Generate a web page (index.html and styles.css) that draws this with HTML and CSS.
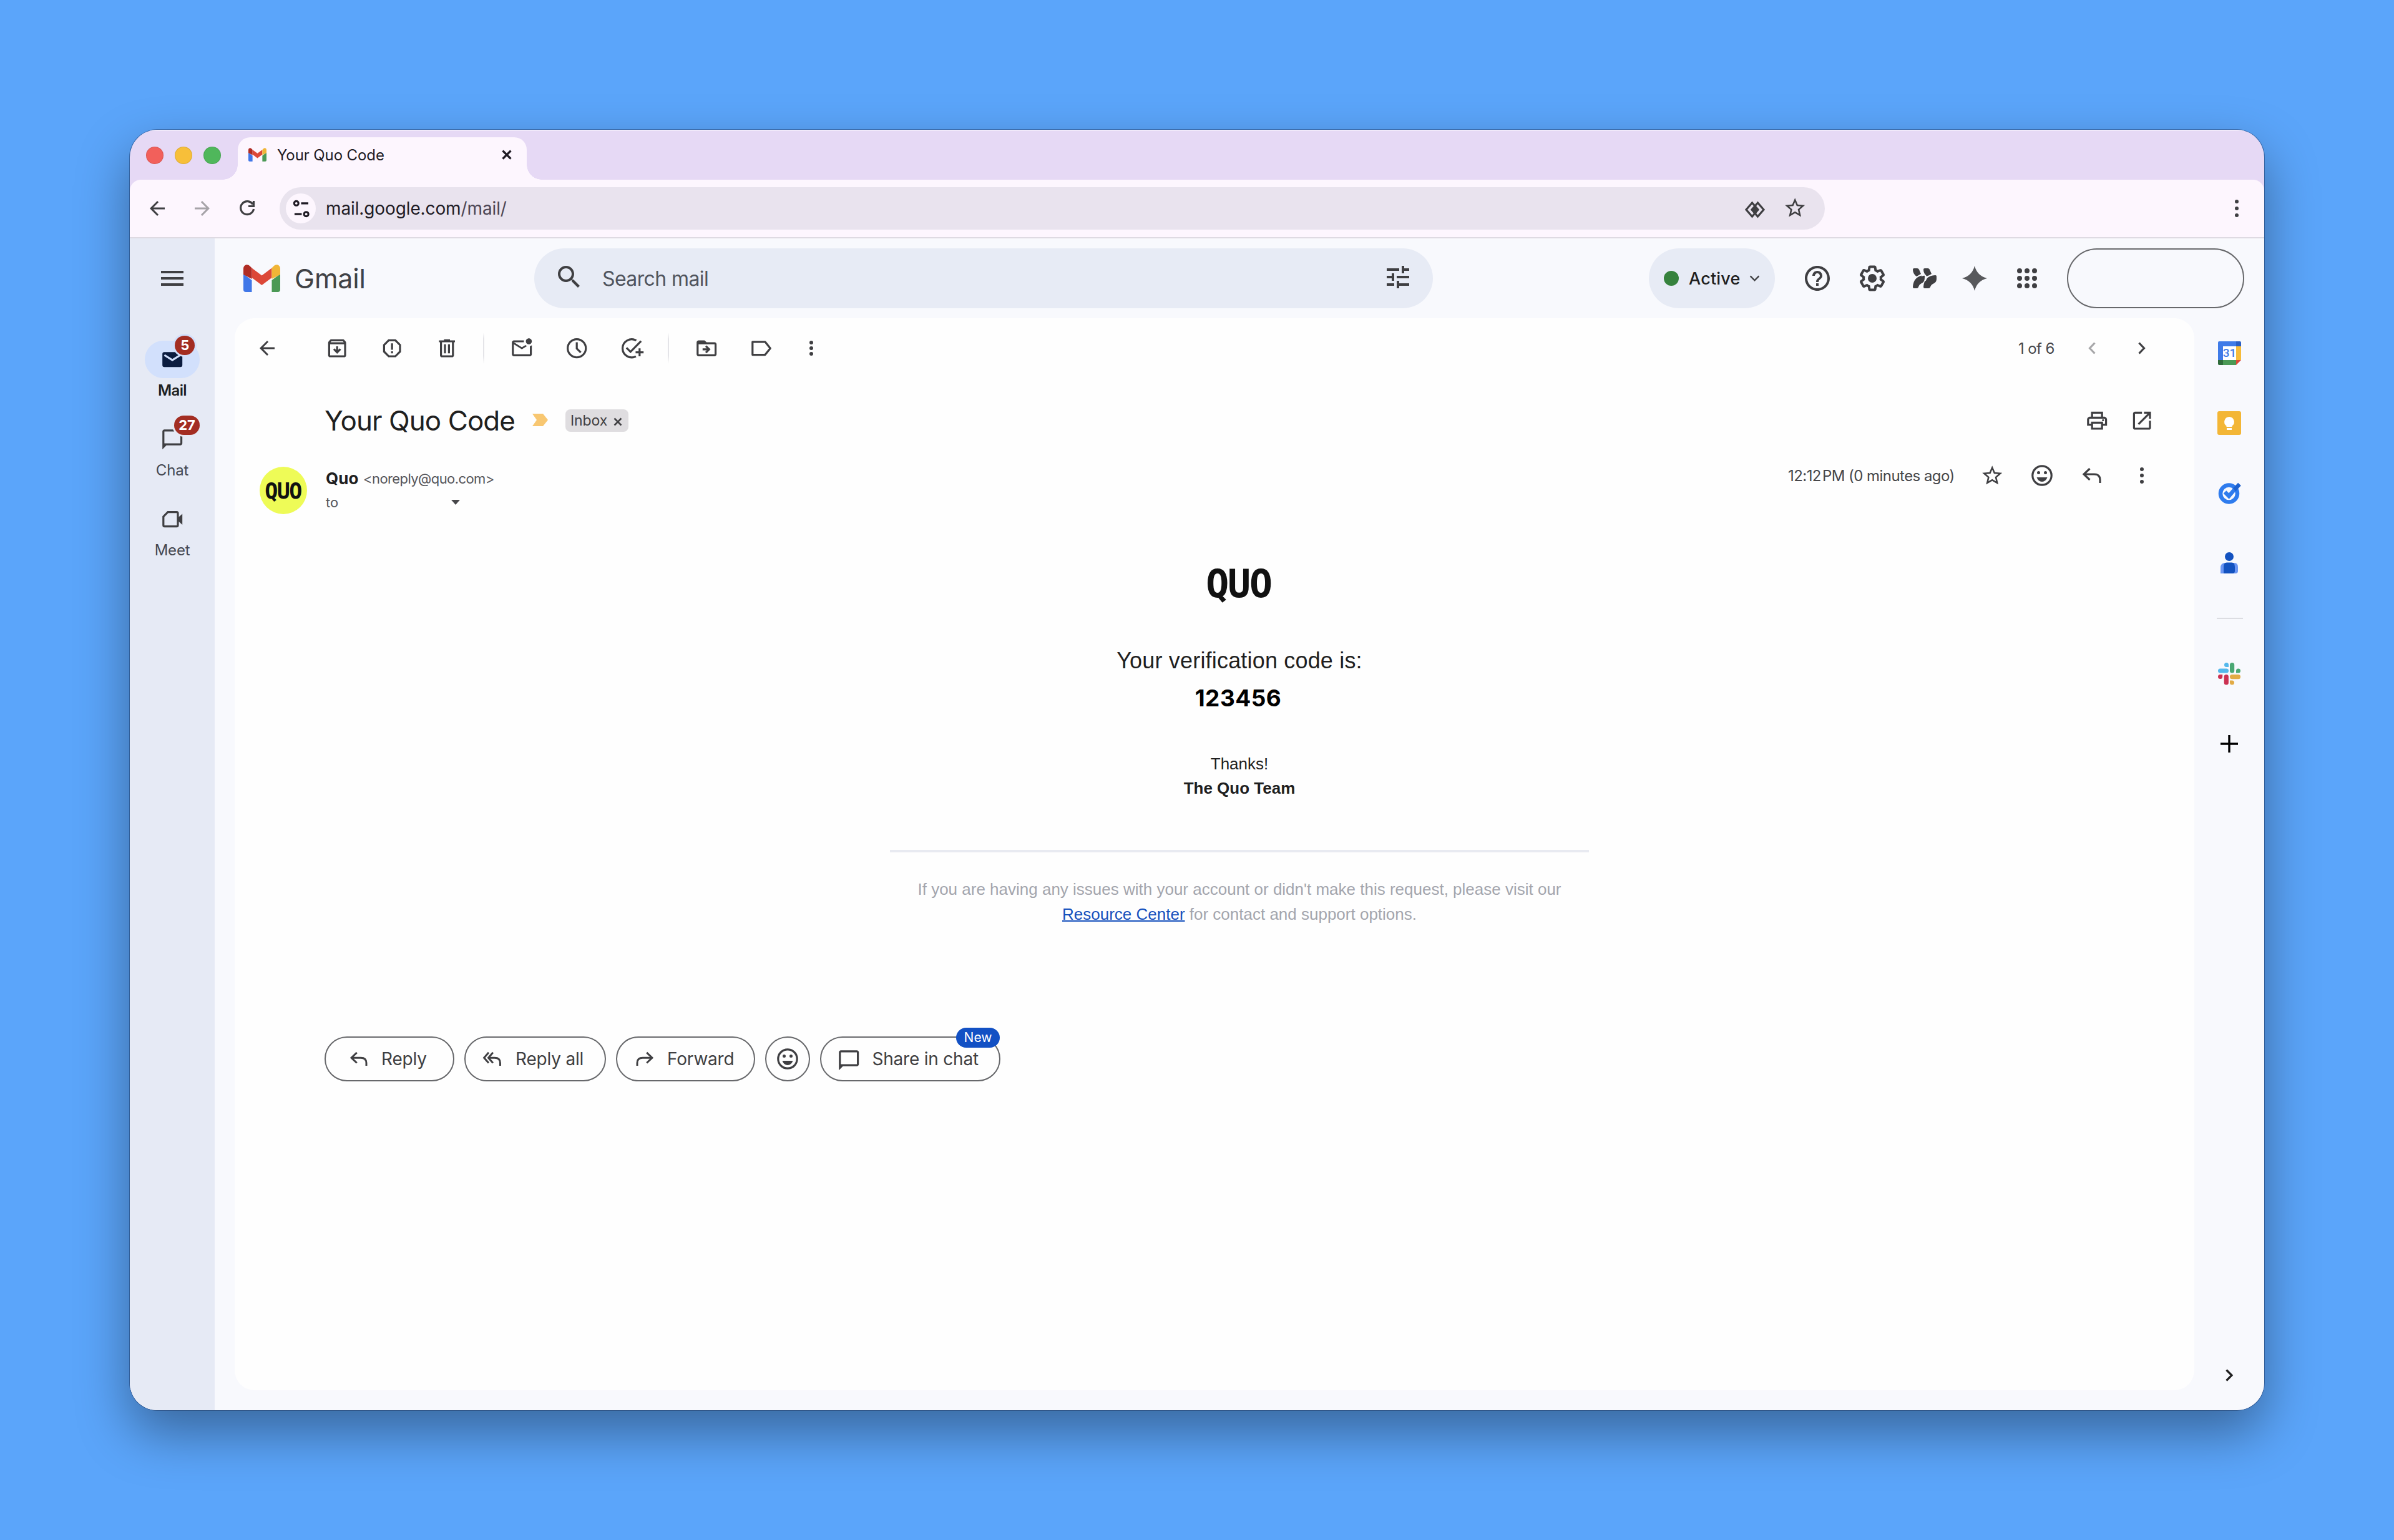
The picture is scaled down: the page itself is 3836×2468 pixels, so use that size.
FILE: index.html
```html
<!DOCTYPE html>
<html lang="en">
<head>
<meta charset="utf-8">
<title>Your Quo Code</title>
<link rel="stylesheet" href="styles.css">
</head>
<body>
<div class="window">
  <div class="tabstrip">
    <span class="light red"></span><span class="light yellow"></span><span class="light green"></span>
    <div class="tab">
      <svg class="fav" viewBox="0 0 59 44"><use href="#gmail"/></svg>
      <span class="t tab-title">Your Quo Code</span>
      <svg class="tab-x" viewBox="0 0 16 16"><path class="s3" d="M1.5 1.5l13 13M14.5 1.5l-13 13"/></svg>
    </div>
  </div>
  <div class="toolbar">
    <svg class="nav" viewBox="0 0 24 24"><path d="M20 11H7.83l5.59-5.59L12 4l-8 8 8 8 1.41-1.41L7.83 13H20v-2z"/></svg>
    <svg class="nav dim" viewBox="0 0 24 24"><path d="M4 11h12.17l-5.59-5.59L12 4l8 8-8 8-1.41-1.41L16.17 13H4v-2z"/></svg>
    <svg class="nav" viewBox="0 0 36 36"><path class="s3" d="M27 11.5A10.5 10.5 0 1 0 28.5 19M28.5 6v8.5H20"/></svg>
    <div class="omnibox">
      <span class="site"><svg viewBox="0 0 26 30"><path class="s3" d="M13 6h12M2 24h12"/><circle class="s3" cx="5" cy="6" r="3.6"/><circle class="s3" cx="21.5" cy="24" r="3.6"/></svg></span>
      <span class="t url">mail.google.com<span class="path">/mail/</span></span>
      <svg class="lens" viewBox="0 0 32 26"><path class="s3" d="M11.5 2L2 13l9.5 11L21 13zM20.5 2L11 13l9.5 11L30 13z"/><path d="M16 6.5l5.5 6.5-5.5 6.5-5.5-6.5z"/></svg>
      <svg class="ic obstar" viewBox="0 0 24 24"><use href="#star"/></svg>
    </div>
    <svg class="menu" viewBox="0 0 8 28"><circle cx="4" cy="3" r="3"/><circle cx="4" cy="14" r="3"/><circle cx="4" cy="25" r="3"/></svg>
  </div>
  <div class="app">
    <nav class="rail">
      <div class="burger"><i></i><i></i><i></i></div>
      <div class="rail-item on">
        <span class="pill"><svg class="ic" viewBox="0 0 24 24"><path d="M4 4.5h16a2 2 0 0 1 2 2v11a2 2 0 0 1-2 2H4a2 2 0 0 1-2-2v-11a2 2 0 0 1 2-2z"/><path class="flap" d="M4 7.5l8 5 8-5"/></svg><b class="badge b5">5</b></span>
        <span class="t">Mail</span>
      </div>
      <div class="rail-item">
        <span class="pill"><svg class="ic" viewBox="0 0 24 24"><use href="#chat"/></svg><b class="badge b27">27</b></span>
        <span class="t">Chat</span>
      </div>
      <div class="rail-item">
        <span class="pill"><svg class="ic" viewBox="0 0 24 24"><path class="s2" d="M7.5 4.8H16.3a1.2 1.2 0 0 1 1.2 1.2V18a1.2 1.2 0 0 1-1.2 1.2H4.2A1.2 1.2 0 0 1 3 18V9.3z"/><path d="M22 6.5v11L17.5 13.5v-3z"/></svg></span>
        <span class="t">Meet</span>
      </div>
    </nav>
    <div class="main">
      <header class="header">
        <svg class="logo" viewBox="0 0 59 44"><g id="gmail"><path fill="#4077e8" d="M0 15l13.5 10v19H4a4 4 0 0 1-4-4z"/><path fill="#4b9955" d="M59 15L45.5 25v19H55a4 4 0 0 0 4-4z"/><path fill="#dc4838" d="M13.5 5.5L29.5 17.5 45.5 5.5V21L29.5 33 13.5 21z"/><path fill="#b02c24" d="M0 16V6.5C0 1 6-2 10.5 2.5l3 3V23z"/><path fill="#f0b537" d="M59 16V6.5C59 1 53-2 48.5 2.5l-3 3V23z"/></g></svg>
        <span class="t gmail-word">Gmail</span>
        <div class="search">
          <svg class="ic48" viewBox="0 0 24 24"><path d="M15.5 14h-.79l-.28-.27C15.41 12.59 16 11.11 16 9.5 16 5.91 13.09 3 9.5 3S3 5.91 3 9.5 5.91 16 9.5 16c1.61 0 3.09-.59 4.23-1.57l.27.28v.79l5 4.99L20.49 19l-4.99-5zm-6 0C7.01 14 5 11.99 5 9.5S7.01 5 9.5 5 14 7.01 14 9.5 11.99 14 9.5 14z"/></svg>
          <span class="t search-text">Search mail</span>
          <svg class="ic48 tune" viewBox="0 0 24 24"><path d="M3 17v2h6v-2H3zM3 5v2h10V5H3zm10 16v-2h8v-2h-8v-2h-2v6h2zM7 9v2H3v2h4v2h2V9H7zm14 4v-2H11v2h10zm-6-4h2V7h4V5h-4V3h-2v6z"/></svg>
        </div>
        <div class="status"><i class="dot"></i><span class="t">Active</span><svg viewBox="0 0 18 12"><path class="s25" d="M1.5 1.5L9 9l7.5-7.5"/></svg></div>
        <span class="hslot w88"><svg class="ic48" viewBox="0 0 24 24"><path d="M11 18h2v-2h-2v2zm1-16C6.48 2 2 6.48 2 12s4.48 10 10 10 10-4.48 10-10S17.52 2 12 2zm0 18c-4.41 0-8-3.59-8-8s3.59-8 8-8 8 3.59 8 8-3.59 8-8 8zm0-14c-2.21 0-4 1.79-4 4h2c0-1.1.9-2 2-2s2 .9 2 2c0 2-3 1.75-3 5h2c0-2.25 3-2.5 3-5 0-2.21-1.79-4-4-4z"/></svg></span>
        <span class="hslot w88"><svg class="ic48" viewBox="0 0 24 24"><path d="M13.85 22.25h-3.7c-.74 0-1.36-.54-1.45-1.27l-.27-1.89c-.27-.14-.53-.29-.79-.46l-1.8.72c-.7.26-1.47-.03-1.81-.65L2.2 15.53c-.35-.66-.2-1.44.36-1.88l1.53-1.19c-.01-.15-.02-.3-.02-.46 0-.15.01-.31.02-.46l-1.52-1.19c-.59-.45-.74-1.26-.37-1.88l1.85-3.19c.34-.62 1.11-.9 1.79-.63l1.81.73c.26-.17.52-.32.78-.46l.27-1.91c.09-.7.71-1.25 1.44-1.25h3.7c.74 0 1.36.54 1.45 1.27l.27 1.89c.27.14.53.29.79.46l1.8-.72c.71-.26 1.48.03 1.82.65l1.84 3.18c.36.66.2 1.44-.36 1.88l-1.52 1.19c.01.15.02.3.02.46s-.01.31-.02.46l1.52 1.19c.56.45.72 1.23.37 1.86l-1.86 3.22c-.34.62-1.11.9-1.8.63l-1.8-.72c-.26.17-.52.32-.78.46l-.27 1.91c-.1.68-.72 1.22-1.46 1.22zm-3.23-2h2.76l.37-2.55.53-.22c.44-.18.88-.44 1.34-.78l.45-.34 2.38.96 1.38-2.4-2.03-1.58.07-.56c.03-.26.06-.51.06-.78s-.03-.53-.06-.78l-.07-.56 2.03-1.58-1.39-2.4-2.39.96-.45-.35c-.42-.32-.87-.58-1.33-.77l-.52-.22-.37-2.55h-2.76l-.37 2.55-.53.21c-.44.19-.88.44-1.34.79l-.45.33-2.38-.95-1.39 2.39 2.03 1.58-.07.56a7 7 0 0 0-.06.79c0 .26.02.53.06.78l.07.56-2.03 1.58 1.38 2.4 2.39-.96.45.35c.43.33.86.58 1.33.77l.53.22.38 2.55z"/><circle cx="12" cy="12" r="3.5"/></svg></span>
        <span class="hslot w80"><svg class="prod" viewBox="0 0 38 32"><path d="M0 2a2 2 0 0 1 2-2h5q2 0 3 2l3 7-7 4Q0 9 0 2zM17 2a2 2 0 0 1 2-2h5q2 0 3 2l3 7-7 4Q17 9 17 2z"/><path d="M0 30Q1 12 19 11v4q0 7-5 9-4 2-5 6-.5 2-3 2H2q-2 0-2-2zM17 30Q18 12 36 11q2 0 2 2v4q0 5-4 7-5 2-6 6-.5 2-3 2h-6q-2 0-2-2z"/><path class="cut" d="M14 12.5Q17 10 21 11.5M20 20q3-7 5-8"/></svg></span>
        <span class="hslot w80"><svg class="spark" viewBox="0 0 40 40"><path d="M20 0Q24 16 40 20 24 24 20 40 16 24 0 20 16 16 20 0z"/></svg></span>
        <span class="hslot w88"><svg class="grid" viewBox="0 0 32 32"><g id="r"><circle cx="4" cy="4" r="4"/><circle cx="16" cy="4" r="4"/><circle cx="28" cy="4" r="4"/></g><use href="#r" y="12"/><use href="#r" y="24"/></svg></span>
        <span class="account"></span>
      </header>
      <div class="content">
        <section class="panel">
          <div class="actions">
            <span class="slot back"><svg class="ic36" viewBox="0 0 24 24"><path d="M20 11H7.83l5.59-5.59L12 4l-8 8 8 8 1.41-1.41L7.83 13H20v-2z"/></svg></span>
            <span class="slot"><svg class="ic" viewBox="0 0 24 24"><path d="M20.54 5.23l-1.39-1.68C18.88 3.21 18.47 3 18 3H6c-.47 0-.88.21-1.16.55L3.46 5.23C3.17 5.57 3 6.02 3 6.5V19c0 1.1.9 2 2 2h14c1.1 0 2-.9 2-2V6.5c0-.48-.17-.93-.46-1.27zM6.24 5h11.52l.83 1H5.42l.82-1zM5 19V8h14v11H5zm11-5.5l-4 4-4-4 1.41-1.41L11 13.67V10h2v3.67l1.59-1.58L16 13.5z"/></svg></span>
            <span class="slot"><svg class="ic" viewBox="0 0 24 24"><path d="M15.73 3H8.27L3 8.27v7.46L8.27 21h7.46L21 15.73V8.27L15.73 3zM19 14.9L14.9 19H9.1L5 14.9V9.1L9.1 5h5.8L19 9.1v5.8z"/><path d="M11 7h2v6.5h-2zM11 15h2v2h-2z"/></svg></span>
            <span class="slot"><svg class="ic" viewBox="0 0 24 24"><path d="M15 4V3H9v1H4v2h1v13c0 1.1.9 2 2 2h10c1.1 0 2-.9 2-2V6h1V4h-5zm2 15H7V6h10v13zM9 8h2v9H9V8zm4 0h2v9h-2V8z"/></svg></span>
            <i class="sep"></i>
            <span class="slot"><svg class="ic" viewBox="0 0 24 24"><path d="M22 8.98V18c0 1.1-.9 2-2 2H4c-1.1 0-2-.9-2-2V6c0-1.1.9-2 2-2h10.1c-.06.32-.1.66-.1 1s.04.68.1 1H4l8 5 3.67-2.29c.47.43 1.02.76 1.63.98L12 13 4 8v10h16V9.9c.74-.15 1.42-.48 2-.92zM16 5c0 1.66 1.34 3 3 3s3-1.34 3-3-1.34-3-3-3-3 1.34-3 3z"/></svg></span>
            <span class="slot"><svg class="ic" viewBox="0 0 24 24"><circle class="s2" cx="12" cy="12" r="9.1"/><path class="s2" d="M12 6v6.2l4 4"/></svg></span>
            <span class="slot"><svg class="ic" viewBox="0 0 24 24"><path class="s2" d="M16.6 4.2A9.1 9.1 0 1 0 16.2 20.1M6.8 11.5l4 4L21.4 4.7M19.9 12v8M15.9 16h8"/></svg></span>
            <i class="sep"></i>
            <span class="slot"><svg class="ic" viewBox="0 0 24 24"><path d="M20 6h-8l-2-2H4c-1.1 0-2 .9-2 2v12c0 1.1.9 2 2 2h16c1.1 0 2-.9 2-2V8c0-1.1-.9-2-2-2zm0 12H4V8h16v10z"/><path d="M12.16 12H8v2h4.16l-1.59 1.59L11.99 17 16 13.01 11.99 9l-1.41 1.41L12.16 12z"/></svg></span>
            <span class="slot"><svg class="ic" viewBox="0 0 24 24"><path class="s2" stroke-linejoin="round" d="M3 5.5h12.6l5.2 6.5-5.2 6.5H3z"/></svg></span>
            <span class="slot more"><svg class="dots" viewBox="0 0 8 24"><circle cx="4" cy="3" r="3"/><circle cx="4" cy="12" r="3"/><circle cx="4" cy="21" r="3"/></svg></span>
            <span class="t count">1 of 6</span>
            <span class="slot pg p1"><svg class="chev dim" viewBox="0 0 12 20"><path class="s3" d="M10.5 1.5L2.5 10l8 8.5"/></svg></span>
            <span class="slot pg"><svg class="chev" viewBox="0 0 12 20"><path class="s3" d="M1.5 1.5l8 8.5-8 8.5"/></svg></span>
          </div>
          <div class="subject">
            <h1 class="t">Your Quo Code</h1>
            <svg class="marker" viewBox="0 0 25 20"><path d="M0 0h17l8 10-8 10H0l7-10z"/></svg>
            <span class="chip"><span class="t">Inbox</span><svg viewBox="0 0 14 14"><path class="s25" d="M1.5 1.5l11 11M12.5 1.5l-11 11"/></svg></span>
            <svg class="ic print" viewBox="0 0 24 24"><path d="M19 8h-1V3H6v5H5c-1.66 0-3 1.34-3 3v6h4v4h12v-4h4v-6c0-1.66-1.34-3-3-3zM8 5h8v3H8V5zm8 12v2H8v-4h8v2zm2-2v-2H6v2H4v-4c0-.55.45-1 1-1h14c.55 0 1 .45 1 1v4h-2z"/><circle cx="18" cy="11.5" r="1"/></svg>
            <svg class="ic open" viewBox="0 0 24 24"><path d="M19 19H5V5h7V3H5c-1.11 0-2 .9-2 2v14c0 1.1.89 2 2 2h14c1.1 0 2-.9 2-2v-7h-2v7zM14 3v2h3.59l-9.83 9.83 1.41 1.41L19 6.41V10h2V3h-7z"/></svg>
          </div>
          <div class="sender">
            <span class="avatar"><span class="quo">QUO</span></span>
            <div class="from">
              <div class="from-line"><b class="t name">Quo</b><span class="t addr">&lt;noreply@quo.com&gt;</span></div>
              <div class="to-line"><span class="t">to</span><i class="caret"></i></div>
            </div>
            <div class="meta">
              <span class="t time">12:12<span class="ampm">PM</span> (0 minutes ago)</span>
              <svg class="ic mstar" viewBox="0 0 24 24"><path id="star" d="M22 9.24l-7.19-.62L12 2 9.19 8.63 2 9.24l5.46 4.73L5.82 21 12 17.27 18.18 21l-1.63-7.03L22 9.24zM12 15.4l-3.76 2.27 1-4.28-3.32-2.88 4.38-.38L12 6.1l1.71 4.04 4.38.38-3.32 2.88 1 4.28L12 15.4z"/></svg>
              <svg class="smile" viewBox="0 0 34 34"><g id="smile"><circle class="s3" cx="17" cy="17" r="15.2"/><circle cx="11.5" cy="12.5" r="2.5"/><circle cx="22.5" cy="12.5" r="2.5"/><path d="M8.5 20h17q-2.5 7-8.5 7t-8.5-7z"/></g></svg>
              <svg class="reply mreply" viewBox="0 0 32 26"><path id="reply" class="s3" d="M12.5 2L3 11l9.5 9M3 11h16.5q9.5 0 9.5 9v5"/></svg>
              <svg class="dots mdots" viewBox="0 0 8 26"><circle cx="4" cy="3" r="3"/><circle cx="4" cy="13" r="3"/><circle cx="4" cy="23" r="3"/></svg>
            </div>
          </div>
          <div class="mail">
            <div class="quo brand">QUO</div>
            <p class="lead">Your verification code is:</p>
            <p class="code">123456</p>
            <p class="sign">Thanks!</p>
            <p class="sign strong">The Quo Team</p>
            <hr>
            <p class="foot">If you are having any issues with your account or didn't make this request, please visit our<br><a>Resource Center</a> for contact and support options.</p>
          </div>
          <div class="buttons">
            <span class="btn reply-b"><svg class="reply" viewBox="0 0 32 26"><use href="#reply"/></svg><span class="t">Reply</span></span>
            <span class="btn all-b"><svg class="reply wide" viewBox="0 0 32 26"><path class="s3" d="M9.5 2L1.5 11l8 9M17 2L9 11l8 9M9 11h11q9.500 0 9.500 9v5"/></svg><span class="t">Reply all</span></span>
            <span class="btn fwd-b"><svg class="reply flip" viewBox="0 0 32 26"><use href="#reply"/></svg><span class="t">Forward</span></span>
            <span class="btn emo-b"><svg class="smile" viewBox="0 0 34 34"><use href="#smile"/></svg></span>
            <span class="btn share-b"><svg class="ic" viewBox="0 0 24 24"><path id="chat" d="M20 2H4c-1.1 0-2 .9-2 2v18l4-4h14c1.1 0 2-.9 2-2V4c0-1.1-.9-2-2-2zm0 14H4V4h16v12z"/></svg><span class="t">Share in chat</span><em class="new">New</em></span>
          </div>
        </section>
        <aside class="side">
          <span class="sslot"><svg width="37" height="38" viewBox="0 0 37 38"><path fill="#3f7be8" d="M2 0h27v8H8v22H0V2a2 2 0 0 1 2-2z"/><path fill="#2a5fc4" d="M29 0h6a2 2 0 0 1 2 2v6h-8z"/><path fill="#f6bb3a" d="M29 8h8v22h-8z"/><path fill="#4b9955" d="M8 30h21v8H8z"/><path fill="#2f6b3a" d="M0 30h8v8H2a2 2 0 0 1-2-2z"/><path fill="#dc4838" d="M29 30h8l-8 8z"/><path fill="#fff" d="M8 8h21v22H8z"/><text x="18.5" y="25" text-anchor="middle">31</text></svg></span>
          <span class="sslot"><svg width="38" height="38" viewBox="0 0 38 38"><rect width="38" height="38" rx="3" fill="#f3b636"/><path fill="#fff" d="M19 9a8 8 0 0 1 4.5 14.5V25h-9v-1.5A8 8 0 0 1 19 9zM15 27h8v3h-8z"/></svg></span>
          <span class="sslot"><svg width="38" height="38" viewBox="0 0 38 38"><circle cx="18.5" cy="20" r="13.5" fill="none" stroke="#2f7cee" stroke-width="6.5"/><path fill="none" stroke="#2f7cee" stroke-width="6.5" d="M12 17.5l6.5 6.5L27 14"/><path fill="none" stroke="#1d62cf" stroke-width="6.5" d="M27 14l8.5-9"/></svg></span>
          <span class="sslot"><svg width="28" height="34" viewBox="0 0 28 34"><circle cx="14" cy="7" r="7" fill="#1352c0"/><path fill="#6b96f3" d="M8 17h14q6 0 6 7v6q0 4-4 4H0V25q0-8 8-8z"/><path fill="#1352c0" d="M10 16.5h8q5 0 5 7V30q0 4-4 4H5V23q0-6.5 5-6.5z"/></svg></span>
          <i class="rule"></i>
          <span class="sslot"><svg width="36" height="36" viewBox="0 0 36 36"><g fill="#54b8ec"><path d="M13.5 0A3.6 3.6 0 0 1 17 3.6V7h-3.5a3.5 3.5 0 0 1 0-7z"/><rect x="0" y="9.5" width="17" height="7" rx="3.5"/></g><g fill="#4aa873"><rect x="19" y="0" width="7.2" height="16.5" rx="3.5"/><path d="M36 13a3.5 3.5 0 0 1-3.5 3.5H29V13a3.5 3.5 0 0 1 7 0z"/></g><g fill="#e2ab45"><rect x="19" y="19" width="17" height="7.2" rx="3.5"/><path d="M22.5 35.5A3.5 3.5 0 0 1 19 32v-3.5h3.5a3.5 3.5 0 0 1 0 7z"/></g><g fill="#cc3152"><rect x="9.7" y="19" width="7.2" height="16.5" rx="3.5"/><path d="M0 22.5A3.5 3.5 0 0 1 3.5 19H7.2v3.5a3.6 3.6 0 0 1-7.2 0z"/></g></svg></span>
          <span class="sslot"><svg width="28" height="28" viewBox="0 0 28 28"><path d="M12.3 0h3.4v12.3H28v3.4H15.7V28h-3.4V15.7H0v-3.4h12.3z" fill="#000"/></svg></span>
          <span class="sslot last"><svg class="chev" viewBox="0 0 12 20"><path class="s3" d="M1.5 1.5l8.5 8.5-8.5 8.5"/></svg></span>
        </aside>
      </div>
    </div>
  </div>
</div>
</body>
</html>
```
FILE: styles.css
```css
* { box-sizing: border-box; }
body {
  margin: 0;
  width: 3836px;
  height: 2468px;
  overflow: hidden;
  padding: 208px;
  background: #5ba5fa;
  font-family: "Inter", sans-serif;
  color: #1f1f1f;
}
svg { display: block; flex: none; fill: #3f3f42; overflow: visible; }
.t { white-space: nowrap; flex: none; }
i, em { font-style: normal; }
.s2, .s25, .s3 { fill: none; stroke: #3f3f42; stroke-width: 2; }
.s25 { stroke-width: 2.6; }
.s3 { stroke-width: 3.2; }
.ic { width: 38.4px; height: 38.4px; }
.ic36 { width: 36px; height: 36px; }
.ic48 { width: 48px; height: 48px; }
.dim { opacity: .45; }

/* Browser chrome */
.window {
  width: 3420px;
  height: 2052px;
  border-radius: 44px;
  overflow: hidden;
  background: #e6d9f5;
  display: flex;
  flex-direction: column;
  box-shadow: 0 0 0 1px rgba(0,20,60,.35), 0 36px 84px rgba(0,0,0,.38);
}
.tabstrip { height: 80px; display: flex; align-items: flex-end; padding-left: 26px; flex: none; box-shadow: inset 0 2px #f1e9fa; }
.light { width: 28px; height: 28px; border-radius: 50%; margin: 0 18px 25px 0; border: 1px solid rgba(0,0,0,.1); }
.red { background: #f2605b; }
.yellow { background: #f7bf39; }
.green { background: #4fb75b; margin-right: 27px; }
.tab { position: relative; width: 463px; height: 68px; border-radius: 20px 20px 0 0; background: #fdf6fe; display: flex; align-items: center; padding: 0 0 12px 17px; }
.tab::before, .tab::after { content: ""; position: absolute; bottom: 0; width: 24px; height: 24px; }
.tab::before { left: -24px; background: radial-gradient(circle at 0 0, transparent 23.5px, #fdf6fe 24px); }
.tab::after { right: -24px; background: radial-gradient(circle at 100% 0, transparent 23.5px, #fdf6fe 24px); }
.fav { width: 29px; height: 22px; }
.tab-title { font-size: 24px; width: 360px; margin-left: 17px; letter-spacing: -.1px; color: #1f1b24; }
.tab-x { width: 16px; height: 16px; }
.tab-x .s3 { stroke: #1f1b24; }
.toolbar { height: 94px; flex: none; background: #fdf6fe; border-bottom: 2px solid #dedae2; border-radius: 18px 18px 0 0; display: flex; align-items: center; padding-left: 26px; }
.nav { width: 36px; height: 36px; margin-right: 36px; }
.omnibox { width: 2476px; height: 68px; border-radius: 34px; background: #e9e3ee; display: flex; align-items: center; padding-left: 10px; margin-left: -2px; }
.site { width: 48px; height: 48px; border-radius: 50%; background: #fdf6fe; display: flex; align-items: center; justify-content: center; }
.site svg { width: 25px; height: 29px; }
.site .s3 { stroke: #1f1b24; }
.url { font-size: 28px; width: 2274px; margin-left: 16px; letter-spacing: -.12px; color: #1f1b24; }
.path { color: #4d4654; }
.lens { width: 32px; height: 26px; margin-top: 4px; }
.obstar { margin-left: 29px; margin-top: -2px; }
.menu { width: 8px; height: 28px; margin-left: 656px; }

/* Application rail */
.app { flex: 1; display: flex; background: #f8f9fd; }
.rail { width: 136px; background: #e6eaf5; display: flex; flex-direction: column; align-items: center; padding-top: 52px; font-size: 24px; letter-spacing: -.2px; color: #444750; }
.burger { width: 36px; height: 24px; display: flex; flex-direction: column; justify-content: space-between; margin-bottom: 88px; }
.burger i { height: 4px; background: #3f3f42; }
.rail-item { height: 128px; width: 88px; display: flex; flex-direction: column; align-items: center; line-height: 30px; }
.pill { position: relative; width: 88px; height: 60px; border-radius: 30px; display: flex; align-items: center; justify-content: center; margin-bottom: 5px; }
.on .pill { background: #d2e0fc; }
.on { color: #1f1f1f; font-weight: 600; letter-spacing: -.6px; }
.on svg { fill: #0b1c3f; }
.flap { fill: none; stroke: #d2e0fc; stroke-width: 2; }
.badge { position: absolute; height: 31px; border-radius: 16px; background: #a32d22; color: #fff; font-size: 22px; line-height: 31px; text-align: center; font-weight: 700; top: -8px; box-shadow: 0 0 0 3px #e6eaf5; }
.b5 { left: 48px; width: 32px; box-shadow: 0 0 0 3px #d2e0fc; }
.b27 { left: 47px; width: 41px; }

/* Header */
.main { flex: 1; display: flex; flex-direction: column; }
.header { height: 128px; display: flex; align-items: center; padding-left: 46px; }
.logo { width: 59px; height: 44px; }
.gmail-word { font-size: 43px; width: 384px; margin-left: 23px; letter-spacing: -.2px; color: #404246; }
.search { width: 1440px; height: 96px; border-radius: 48px; background: #e7ebf5; display: flex; align-items: center; padding: 0 32px; }
.search-text { font-size: 32px; width: 1251px; margin-left: 29px; letter-spacing: -.6px; color: #50545d; }
.search .ic48 { margin-top: -4px; }
.status { margin-left: 346px; margin-right: 24px; width: 202px; height: 96px; border-radius: 48px; background: #e7ebf5; display: flex; align-items: center; padding-left: 24px; font-size: 27px; font-weight: 500; }
.dot { width: 24px; height: 24px; border-radius: 50%; background: #36823d; margin-right: 16px; }
.status .t { width: 82px; margin-right: 15px; letter-spacing: .2px; }
.status svg { width: 17px; height: 11px; }
.hslot { display: flex; justify-content: center; }
.w88 { width: 88px; }
.w80 { width: 80px; }
.prod { width: 38px; height: 32px; }
.cut { fill: none; stroke: #f8f9fd; stroke-width: 1.5; }
.spark { width: 40px; height: 40px; fill: #58595c; }
.grid { width: 32px; height: 32px; }
.account { width: 284px; height: 96px; border: 2px solid #67686b; border-radius: 48px; margin-left: 20px; }

/* Message panel */
.content { flex: 1; display: flex; padding-left: 32px; }
.panel { width: 3140px; height: 1718px; border-radius: 32px; background: #fefefe; }
.actions { height: 96px; display: flex; align-items: center; padding-left: 8px; }
.slot { width: 88px; display: flex; justify-content: center; flex: none; }
.back { margin-right: 24px; }
.more { width: 72px; }
.sep { width: 2px; height: 50px; background: linear-gradient(transparent, #e4e4e8 20%, #e4e4e8 75%, transparent); margin: 0 16px 0 14px; }
.dots { width: 8px; height: 24px; }
.count { font-size: 24px; width: 78px; margin-left: 1898px; letter-spacing: -.6px; color: #47474a; }
.pg { width: 80px; }
.chev { width: 12px; height: 20px; }
.subject { height: 136px; display: flex; align-items: center; padding-left: 144px; }
h1 { margin: 0; font-size: 44px; font-weight: 400; width: 333px; letter-spacing: -.95px; }
.marker { width: 25px; height: 20px; fill: #f8c771; margin-top: -2px; }
.chip { width: 101px; height: 36px; border-radius: 8px; background: #dfdde0; margin-left: 28px; display: flex; align-items: center; padding-left: 8px; font-size: 23px; letter-spacing: -.1px; color: #3f3f42; }
.chip .t { width: 69px; }
.chip svg { width: 14px; height: 14px; margin-top: 3px; }
.print { margin-left: 2334px; }
.open { margin-left: 34px; }
.sender { height: 82px; padding: 6px 0 0 40px; display: flex; }
.avatar { width: 76px; height: 76px; border-radius: 50%; background: #eefb57; display: flex; align-items: center; justify-content: center; }
.quo { font-family: "DejaVu Sans Mono", monospace; font-weight: 700; color: #111; }
.avatar .quo { font-size: 35px; letter-spacing: -1.5px; line-height: 1; margin: 2px 1px 0 0; }
.from { margin-left: 30px; width: 2343px; }
.from-line { height: 37px; display: flex; align-items: center; font-size: 22px; color: #55555a; }
.name { font-size: 26px; width: 60px; color: #1f1f1f; }
.addr { letter-spacing: -.58px; }
.to-line { height: 40px; display: flex; align-items: center; font-size: 22px; color: #55555a; }
.to-line .t { width: 201px; }
.caret { border: 7px solid transparent; border-top: 8px solid #47474a; border-bottom: 0; }
.meta { height: 28px; display: flex; align-items: center; }
.time { font-size: 24px; width: 308px; letter-spacing: -.55px; color: #47474a; }
.ampm { margin-left: 2px; }
.smile { width: 34px; height: 34px; }
.reply { width: 32px; height: 26px; }
.meta .smile { margin-left: 44px; }
.mreply { margin-left: 47px; }
.mdots { height: 26px; margin-left: 60px; }

/* Message body */
.mail { padding: 77px 64px 0 144px; text-align: center; }
.mail p { margin: 0; }
.brand { font-size: 61.5px; line-height: 70px; letter-spacing: -2.2px; padding-right: 3px; }
.mail .lead { margin-top: 58px; font: 36px/60px "Liberation Sans", sans-serif; letter-spacing: .18px; }
.mail .code { font-size: 37px; font-weight: 700; line-height: 60px; letter-spacing: .45px; color: #000; padding-right: 4px; }
.sign { font: 26px/39px "Liberation Sans", sans-serif; }
.mail .code + .sign { margin-top: 56px; }
.mail .strong { font-weight: 700; }
hr { width: 1120px; height: 4px; border: 0; background: #e8eaf1; margin: 79px auto 40px; }
.foot { font: 26px/39.5px "Liberation Sans", sans-serif; color: #a3a5ad; }
a { color: #1550bd; text-decoration: underline; text-decoration-thickness: 2px; }

/* Reply actions */
.buttons { margin-top: 176px; display: flex; padding-left: 144px; }
.btn { position: relative; height: 72px; border: 2px solid #67686b; border-radius: 36px; display: flex; align-items: center; font-size: 28px; letter-spacing: -.2px; color: #3f3f42; margin-right: 16px; }
.reply-b { width: 208px; padding-left: 38px; }
.all-b { width: 227px; padding-left: 27px; }
.fwd-b { width: 223px; padding-left: 29px; }
.emo-b { width: 72px; justify-content: center; }
.share-b { width: 289px; padding-left: 25px; }
.btn .reply { width: 30px; height: 24px; margin-right: 21px; }
.btn .wide { width: 32px; height: 24px; }
.btn .flip { transform: scaleX(-1); }
.btn .ic { margin: 4px 18px 0 0; }
.new { position: absolute; right: -1px; top: -16px; width: 70px; height: 32px; border-radius: 16px; background: #1250c4; color: #fff; font-size: 21px; letter-spacing: 0; line-height: 32px; text-align: center; }

/* Side panel */
.side { width: 112px; display: flex; flex-direction: column; }
.sslot { height: 112px; display: flex; align-items: center; justify-content: center; }
.side text { font: 500 19px "Roboto", sans-serif; fill: #3f7be8; }
.rule { height: 2px; width: 42px; margin: 32px 0 32px 36px; background: #dcdde2; }
.last { margin-top: auto; }
.last .s3 { stroke: #1f1f1f; }
```
